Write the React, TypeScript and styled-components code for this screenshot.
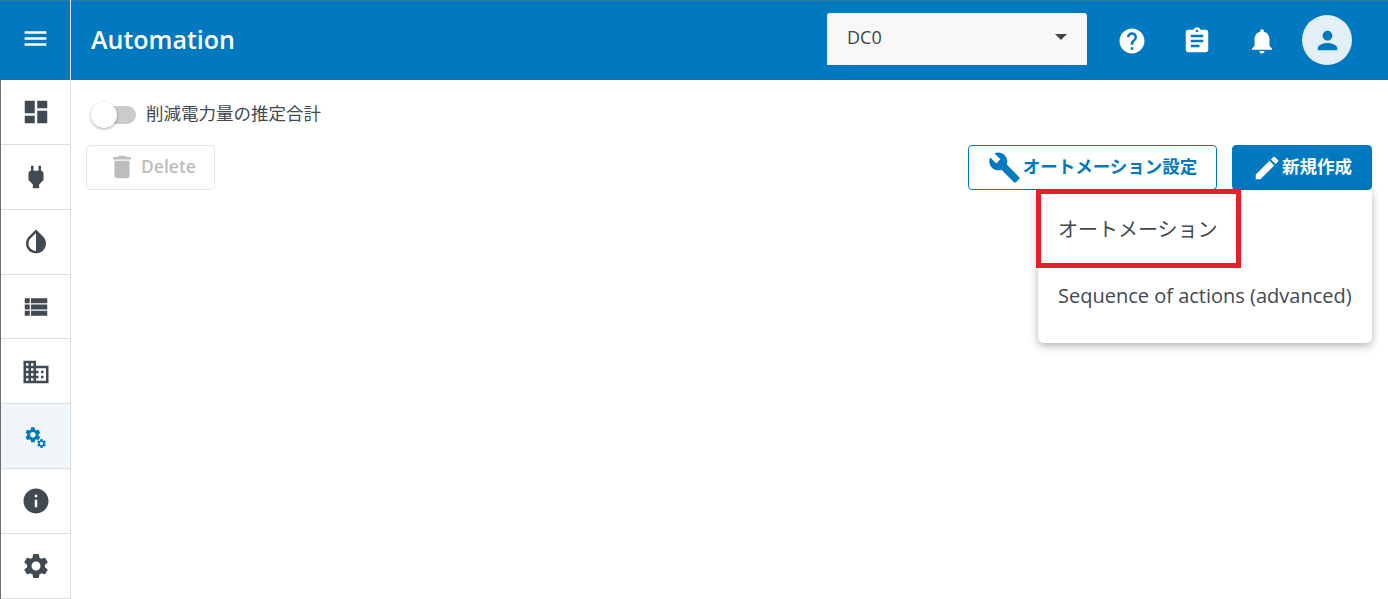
import React from 'react';
import styled, { createGlobalStyle } from 'styled-components';
import {
  MdAssignment,
  MdBuild,
  MdDashboard,
  MdDelete,
  MdDomain,
  MdEdit,
  MdHelp,
  MdInfo,
  MdInvertColors,
  MdMenu,
  MdNotifications,
  MdPerson,
  MdPower,
  MdSettings,
  MdViewList,
} from 'react-icons/md';

const BLUE = '#0079c1';
const INK = '#414a52';
const FONT = '"Open Sans", "Noto Sans CJK JP", sans-serif';
const GEAR =
  'M19.14 12.94c.04-.3.06-.61.06-.94 0-.32-.02-.64-.07-.94l2.03-1.58c.18-.14.23-.41.12-.61l-1.92-3.32c-.12-.22-.37-.29-.59-.22l-2.39.96c-.5-.38-1.03-.7-1.62-.94l-.36-2.54c-.04-.24-.24-.41-.48-.41h-3.84c-.24 0-.43.17-.47.41l-.36 2.54c-.59.24-1.13.57-1.62.94l-2.39-.96c-.22-.08-.47 0-.59.22L2.74 8.87c-.12.21-.08.47.12.61l2.03 1.58c-.05.3-.09.63-.09.94s.02.64.07.94l-2.03 1.58c-.18.14-.23.41-.12.61l1.92 3.32c.12.22.37.29.59.22l2.39-.96c.5.38 1.03.7 1.62.94l.36 2.54c.05.24.24.41.48.41h3.84c.24 0 .44-.17.47-.41l.36-2.54c.59-.24 1.13-.56 1.62-.94l2.39.96c.22.08.47 0 .59-.22l1.92-3.32c.12-.22.07-.47-.12-.61l-2.01-1.58zM12 15.6c-1.98 0-3.6-1.62-3.6-3.6s1.62-3.6 3.6-3.6 3.6 1.62 3.6 3.6-1.62 3.6-3.6 3.6z';

const GlobalStyle = createGlobalStyle`
  html, body {
    margin: 0;
    padding: 0;
    background: #fff;
    overflow: hidden;
  }
  * {
    box-sizing: border-box;
  }
`;

const Page = styled.div`
  width: 1388px;
  height: 599px;
  display: flex;
  flex-direction: column;
  font-family: ${FONT};
  color: ${INK};
  overflow: hidden;
`;

const Header = styled.header`
  height: 80px;
  flex: none;
  display: flex;
  align-items: stretch;
  background: ${BLUE};
  box-shadow: inset 0 1px 0 #2a7a9f;
  color: #fff;
`;

const MenuCell = styled.div`
  width: 71px;
  flex: none;
  display: flex;
  align-items: center;
  justify-content: center;
  padding: 0 0 4px 0;
  font-size: 29px;
  border-right: 1px solid #d7e3ec;
`;

const Title = styled.h1`
  margin: 0 0 3px 20px;
  align-self: center;
  font-size: 25px;
  font-weight: 600;
  flex: 1;
`;

const SiteSelect = styled.div`
  width: 260px;
  height: 52px;
  margin-top: 13px;
  padding: 0 20px 5px;
  display: flex;
  align-items: center;
  justify-content: space-between;
  background: #f8f8f8;
  border-radius: 3px 3px 0 0;
  color: #444;
  font-size: 18px;
`;

const Caret = styled.span`
  width: 0;
  height: 0;
  margin-top: 1px;
  border-left: 6px solid transparent;
  border-right: 6px solid transparent;
  border-top: 6px solid #444;
`;

const HeaderIcons = styled.div`
  display: flex;
  align-items: center;
  margin-left: 15px;
  padding-right: 36px;
`;

const HeaderIcon = styled.span`
  width: 60px;
  margin-right: 5px;
  padding-top: 1px;
  display: flex;
  justify-content: center;
  font-size: 30px;
`;

const Avatar = styled.span`
  width: 50px;
  height: 50px;
  border-radius: 50%;
  margin-left: 5px;
  display: flex;
  align-items: center;
  justify-content: center;
  background: #e3eef7;
  color: ${BLUE};
  font-size: 29px;
`;

const Body = styled.div`
  flex: 1;
  display: flex;
  min-height: 0;
`;

const Sidebar = styled.nav`
  width: 71px;
  flex: none;
  display: flex;
  flex-direction: column;
  border-left: 1px solid #6b6f72;
  border-right: 1px solid #dcdfe2;
`;

const NavItem = styled.div<{ $active?: boolean }>`
  height: 64.85px;
  flex: none;
  padding-top: 1px;
  display: flex;
  align-items: center;
  justify-content: center;
  border-bottom: 1px solid #dcdfe2;
  background: ${(p) => (p.$active ? '#f1f6fb' : '#fff')};
  color: ${(p) => (p.$active ? BLUE : INK)};
  font-size: 30px;
`;

const Main = styled.main`
  position: relative;
  flex: 1;
  padding: 0 16px 0 15px;
`;

const ToggleRow = styled.div`
  height: 65px;
  display: flex;
  align-items: center;
  gap: 10px;
  padding: 4px 0 0 4px;
  font-size: 17.5px;
`;

const ToggleLabel = styled.span`
  margin-top: -4px;
`;

const Toggle = styled.span`
  position: relative;
  width: 44px;
  height: 18px;
  margin-left: 2px;
  border-radius: 9px;
  background: #c9cbcc;
`;

const Thumb = styled.span`
  position: absolute;
  left: -1px;
  top: -4px;
  width: 26px;
  height: 26px;
  border-radius: 50%;
  background: #fff;
  box-shadow: 0 1px 3px rgba(0, 0, 0, 0.35);
`;

const ActionRow = styled.div`
  display: flex;
  align-items: flex-start;
`;

const Button = styled.button<{ $variant: 'ghost' | 'outline' | 'solid' }>`
  height: 45px;
  display: flex;
  align-items: center;
  justify-content: center;
  border-radius: 4px;
  font-family: ${FONT};
  font-size: 17.5px;
  border: 1px solid ${(p) => (p.$variant === 'ghost' ? '#e6e6e6' : BLUE)};
  background: ${(p) => (p.$variant === 'solid' ? BLUE : '#fff')};
  color: ${(p) => (p.$variant === 'solid' ? '#fff' : p.$variant === 'outline' ? BLUE : '#bdbdbd')};
  font-weight: ${(p) => (p.$variant === 'ghost' ? 600 : 700)};
  padding: 0 0 4px;
  svg {
    flex: none;
    font-size: 30px;
    margin-top: 4px;
  }
`;

const DeleteButton = styled(Button)`
  width: 129px;
  margin-right: auto;
  gap: 4px;
  padding-left: 2px;
  svg {
    margin-top: 2px;
  }
`;

const SettingsButton = styled(Button)`
  width: 249px;
  margin-right: 15px;
  gap: 2px;
  svg {
    font-size: 33px;
  }
`;

const CreateButton = styled(Button)`
  width: 140px;
  gap: 0;
`;

const DropMenu = styled.div`
  position: absolute;
  top: 110px;
  right: 16px;
  width: 334px;
  height: 153px;
  padding: 5px 20px;
  background: #fff;
  border-radius: 0 0 6px 6px;
  box-shadow: 0 3px 8px rgba(0, 0, 0, 0.3);
  color: ${INK};
`;

const DropItem = styled.div`
  height: 67px;
  display: flex;
  align-items: center;
  font-size: 20px;
  white-space: nowrap;
`;

const Callout = styled.div`
  position: absolute;
  top: 109px;
  left: 965px;
  width: 205px;
  height: 79px;
  border: 5px solid #e71f2d;
  pointer-events: none;
`;

const GearsIcon = () => (
  <svg width="30" height="30" viewBox="0 0 30 30" fill="currentColor">
    <path d={GEAR} transform="translate(2.5 3.5) scale(0.78)" />
    <path d={GEAR} transform="translate(15 16) scale(0.46)" />
  </svg>
);

const navItems = [
  { key: 'dashboard', icon: <MdDashboard /> },
  { key: 'power', icon: <MdPower /> },
  { key: 'water', icon: <MdInvertColors /> },
  { key: 'list', icon: <MdViewList /> },
  { key: 'domain', icon: <MdDomain /> },
  { key: 'automation', icon: <GearsIcon />, active: true },
  { key: 'info', icon: <MdInfo /> },
  { key: 'settings', icon: <MdSettings /> },
];

export default function App() {
  return (
    <Page>
      <GlobalStyle />
      <Header>
        <MenuCell>
          <MdMenu />
        </MenuCell>
        <Title>Automation</Title>
        <SiteSelect>
          DC0
          <Caret />
        </SiteSelect>
        <HeaderIcons>
          <HeaderIcon>
            <MdHelp />
          </HeaderIcon>
          <HeaderIcon>
            <MdAssignment />
          </HeaderIcon>
          <HeaderIcon>
            <MdNotifications />
          </HeaderIcon>
          <Avatar>
            <MdPerson />
          </Avatar>
        </HeaderIcons>
      </Header>
      <Body>
        <Sidebar>
          {navItems.map((item) => (
            <NavItem key={item.key} $active={item.active}>
              {item.icon}
            </NavItem>
          ))}
        </Sidebar>
        <Main>
          <ToggleRow>
            <Toggle>
              <Thumb />
            </Toggle>
            <ToggleLabel>削減電力量の推定合計</ToggleLabel>
          </ToggleRow>
          <ActionRow>
            <DeleteButton $variant="ghost">
              <MdDelete />
              Delete
            </DeleteButton>
            <SettingsButton $variant="outline">
              <MdBuild />
              オートメーション設定
            </SettingsButton>
            <CreateButton $variant="solid">
              <MdEdit />
              新規作成
            </CreateButton>
          </ActionRow>
          <DropMenu>
            <DropItem>オートメーション</DropItem>
            <DropItem>Sequence of actions (advanced)</DropItem>
          </DropMenu>
          <Callout />
        </Main>
      </Body>
    </Page>
  );
}
